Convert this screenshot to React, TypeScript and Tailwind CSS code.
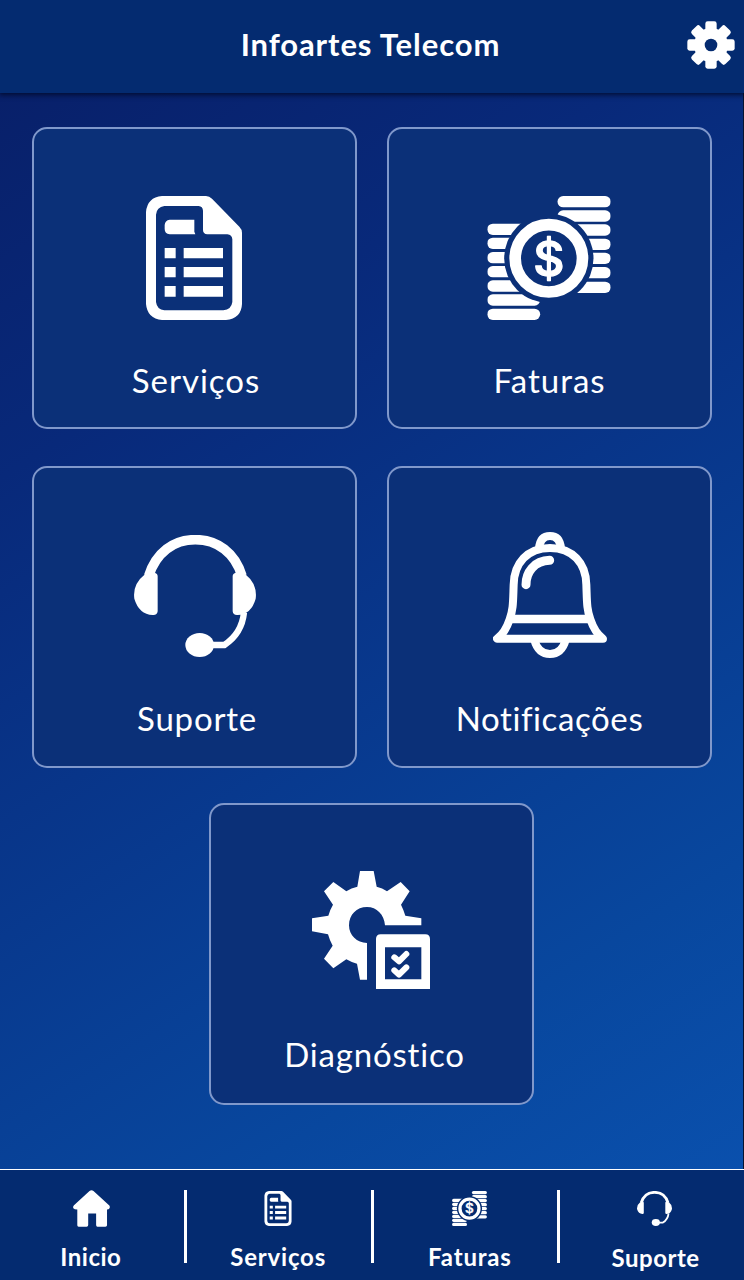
import { useId } from "react";
import type { ReactNode } from "react";

type IconProps = { className?: string };

function ServicesIcon({ className }: IconProps) {
  return (
    <svg viewBox="78 48 288 372" className={className} fill="currentColor" aria-hidden="true">
      <path
        fillRule="evenodd"
        d="M126 48H258Q268 49 276 56L358 140Q366 148 366 158V372Q364 416 318 420H126Q82 416 78 372V96Q82 52 126 48ZM133 78Q110 81 108 104V366Q111 389 133 391H310Q334 389 337 366V178Q336 164 322 163H262Q249 162 249 150V92Q248 79 236 78Z"
      />
      <path d="M149 119H223V155L226 163H149Q134 161 134 147V135Q135 121 149 119Z" />
      <path d="M134 204h33v31h-33zM134 261h33v31h-33zM134 318h33v32h-33zM191 204h118v31H191zM191 261h118v31H191zM191 318h118v32H191z" />
    </svg>
  );
}

function BillsIcon({ className }: IconProps) {
  const id = useId();
  const left = [131, 173, 216, 258, 301, 343, 386];
  const right = [48, 91, 133, 176, 218, 261, 305];
  return (
    <svg viewBox="53 48 371 372" className={className} fill="currentColor" aria-hidden="true">
      <mask id={id} maskUnits="userSpaceOnUse" x="53" y="48" width="371" height="372">
        <rect x="53" y="48" width="371" height="372" fill="white" />
        <circle cx="238" cy="235" r="134" fill="black" />
      </mask>
      <g mask={`url(#${id})`}>
        {left.map((y) => (
          <rect key={y} x="53" y={y} width="159" height="34" rx="17" />
        ))}
        {right.map((y) => (
          <rect key={y} x="264" y={y} width="160" height="34" rx="17" />
        ))}
      </g>
      <circle cx="238" cy="235" r="101" fill="none" stroke="currentColor" strokeWidth="35" />
      <text
        x="238"
        y="287"
        textAnchor="middle"
        stroke="currentColor"
        strokeWidth="4"
        strokeLinejoin="round"
        className="font-['Inter','Liberation_Sans',sans-serif] text-[145px] font-medium"
      >
        $
      </text>
    </svg>
  );
}

function SupportIcon({ className }: IconProps) {
  return (
    <svg viewBox="42 45 366 366" className={className} fill="currentColor" aria-hidden="true">
      <path d="M86 168C108 98 160 59 226 59S345 98 366 168" fill="none" stroke="currentColor" strokeWidth="29" />
      <path d="M75 163Q88 156 103 158Q113 160 113 169V274Q112 286 98 285Q57 283 43 236Q37 193 75 163Z" />
      <path d="M376 163Q363 156 348 158Q338 160 338 169V274Q339 286 353 285Q394 283 407 236Q413 193 376 163Z" />
      <path d="M372 278Q365 341 313 375H275" fill="none" stroke="currentColor" strokeWidth="19" />
      <ellipse cx="239" cy="375" rx="43" ry="36" />
    </svg>
  );
}

function BellIcon({ className }: IconProps) {
  return (
    <svg viewBox="159 36 342 378" className={className} fill="none" stroke="currentColor" aria-hidden="true">
      <path d="M297 86C299 60 311 48 330 48S361 60 363 86" strokeWidth="24" />
      <path d="M310 88V80H350V88Z" fill="currentColor" stroke="none" />
      <path
        d="M330 84C262 84 222 130 221 194C219 247 220 267 209 298C201 322 191 342 171 356H489C469 342 459 322 451 298C440 267 441 247 439 194C438 130 398 84 330 84Z"
        strokeWidth="24"
        strokeLinejoin="round"
      />
      <path d="M214 297H446" strokeWidth="25" />
      <path d="M283 360C291 389 307 402 330 402S369 389 377 360" strokeWidth="24" />
      <path d="M258 194C258 158 282 122 329 121" strokeWidth="27" strokeLinecap="round" />
    </svg>
  );
}

function DiagnosticIcon({ className }: IconProps) {
  return (
    <svg viewBox="126 33 354 354" className={className} fill="currentColor" aria-hidden="true">
      <path d="M270 33H311L320 80Q337 84 351 94L392 66L419 94L393 134Q401 150 406 167L454 175V196H345C343 164 320 141 291 141C260 141 237 164 237 196C237 226 261 249 291 249V359H270L261 311Q244 307 229 298L190 325L162 296L188 257Q179 241 174 223L126 214V175L175 167Q180 149 189 134L162 94L190 66L229 94Q244 84 262 80Z" />
      <path fillRule="evenodd" d="M332 223H466Q480 223 480 237V387H318V237Q318 223 332 223ZM345 262V358H454V262Z" />
      <path
        d="M373 292L387 304L409 282M373 331L387 344L409 322"
        fill="none"
        stroke="currentColor"
        strokeWidth="18"
        strokeLinecap="round"
        strokeLinejoin="round"
      />
    </svg>
  );
}

function SettingsIcon({ className }: IconProps) {
  return (
    <svg viewBox="-72 -72 144 144" className={className} aria-hidden="true">
      <g fill="currentColor">
        {[0, 45, 90, 135].map((angle) => (
          <rect key={angle} x="-17" y="-71" width="34" height="142" rx="7" transform={`rotate(${angle})`} />
        ))}
      </g>
      <circle r="34" fill="none" stroke="currentColor" strokeWidth="34" />
      <circle r="19" fill="#042b70" />
    </svg>
  );
}

function HomeIcon({ className }: IconProps) {
  return (
    <svg viewBox="218 92 112 112" className={className} fill="currentColor" aria-hidden="true">
      <path d="M268 95Q274 90 280 95L328 139Q331 143 328 148Q326 151 321 151V199Q321 203 316 203H292Q288 203 288 198V163H264V198Q264 203 259 203H235Q231 203 231 199V151Q222 151 219 147Q217 142 221 138Z" />
    </svg>
  );
}

function Card({ label, labelClass, children }: { label: string; labelClass: string; children: ReactNode }) {
  return (
    <button className="flex h-[302px] w-[325px] flex-col items-center rounded-[15px] border-2 border-[#8098cb] bg-[#0b3078]">
      <span className="flex h-[229px] flex-col items-center">{children}</span>
      <span className={`whitespace-nowrap text-[33px] leading-[44px] ${labelClass}`}>{label}</span>
    </button>
  );
}

function NavItem({ label, labelClass, children }: { label: string; labelClass: string; children: ReactNode }) {
  return (
    <button className="flex w-[184px] flex-col items-center">
      <span className="flex h-[52px] items-start">{children}</span>
      <span className={`whitespace-nowrap text-2xl leading-[30px] font-bold ${labelClass}`}>{label}</span>
    </button>
  );
}

function Divider() {
  return <span className="h-[73px] w-[3px] shrink-0 bg-white" />;
}

export default function App() {
  return (
    <div className="flex h-[1280px] w-[744px] flex-col overflow-hidden bg-[#042b70] font-['Lato','Liberation_Sans',sans-serif] text-white">
      <header className="z-10 grid h-[93px] shrink-0 grid-cols-[1fr_auto_1fr] items-start bg-[#042b70] shadow-[0_1px_5px_1px_rgba(0,8,35,0.8)]">
        <span />
        <h1 className="mr-[3px] pt-[24px] text-[31px] leading-[40px] font-bold tracking-[0.9px]">Infoartes Telecom</h1>
        <button aria-label="Configurações" className="mt-[21px] mr-[9px] justify-self-end">
          <SettingsIcon className="size-12" />
        </button>
      </header>

      <main className="flex flex-1 flex-col items-center border-r border-[#06132f] bg-[linear-gradient(148deg,#08206a_0%,#08297a_25%,#08398e_55%,#08479e_80%,#0a50ad_100%)] pt-[34px]">
        <div className="grid grid-cols-2 gap-x-[30px] gap-y-[37px]">
          <Card label="Serviços" labelClass="pl-1 tracking-[1px]">
            <ServicesIcon className="mt-[67px] h-[124px] w-24" />
          </Card>
          <Card label="Faturas" labelClass="pl-px tracking-[1px]">
            <BillsIcon className="mt-[67px] size-[124px]" />
          </Card>
          <Card label="Suporte" labelClass="-mt-px pl-[6px] tracking-[0.8px]">
            <SupportIcon className="mt-[67px] ml-[2px] size-[122px]" />
          </Card>
          <Card label="Notificações" labelClass="-mt-px pl-px tracking-[0.6px]">
            <BellIcon className="mt-[64px] ml-[2px] h-[126px] w-[114px]" />
          </Card>
        </div>
        <div className="mt-[35px]">
          <Card label="Diagnóstico" labelClass="-mt-[2px] pl-[6px] tracking-[0.8px]">
            <DiagnosticIcon className="mt-[66px] mr-[2px] size-[118px]" />
          </Card>
        </div>
      </main>

      <nav className="flex h-[111px] shrink-0 border-t border-white bg-[#042b70] pt-5">
        <NavItem label="Inicio" labelClass="mr-[2px] tracking-[0.5px]">
          <HomeIcon className="mr-px size-[37px]" />
        </NavItem>
        <Divider />
        <NavItem label="Serviços" labelClass="mr-px tracking-[0.8px]">
          <ServicesIcon className="mt-[1px] mr-[2px] h-[35px] w-7" />
        </NavItem>
        <Divider />
        <NavItem label="Faturas" labelClass="ml-[9px] tracking-[0.8px]">
          <BillsIcon className="mt-[1px] ml-[8px] size-[35px]" />
        </NavItem>
        <Divider />
        <NavItem label="Suporte" labelClass="mt-px ml-[7px] tracking-[0.5px]">
          <SupportIcon className="mt-[1px] ml-1 size-[35px]" />
        </NavItem>
      </nav>
    </div>
  );
}
